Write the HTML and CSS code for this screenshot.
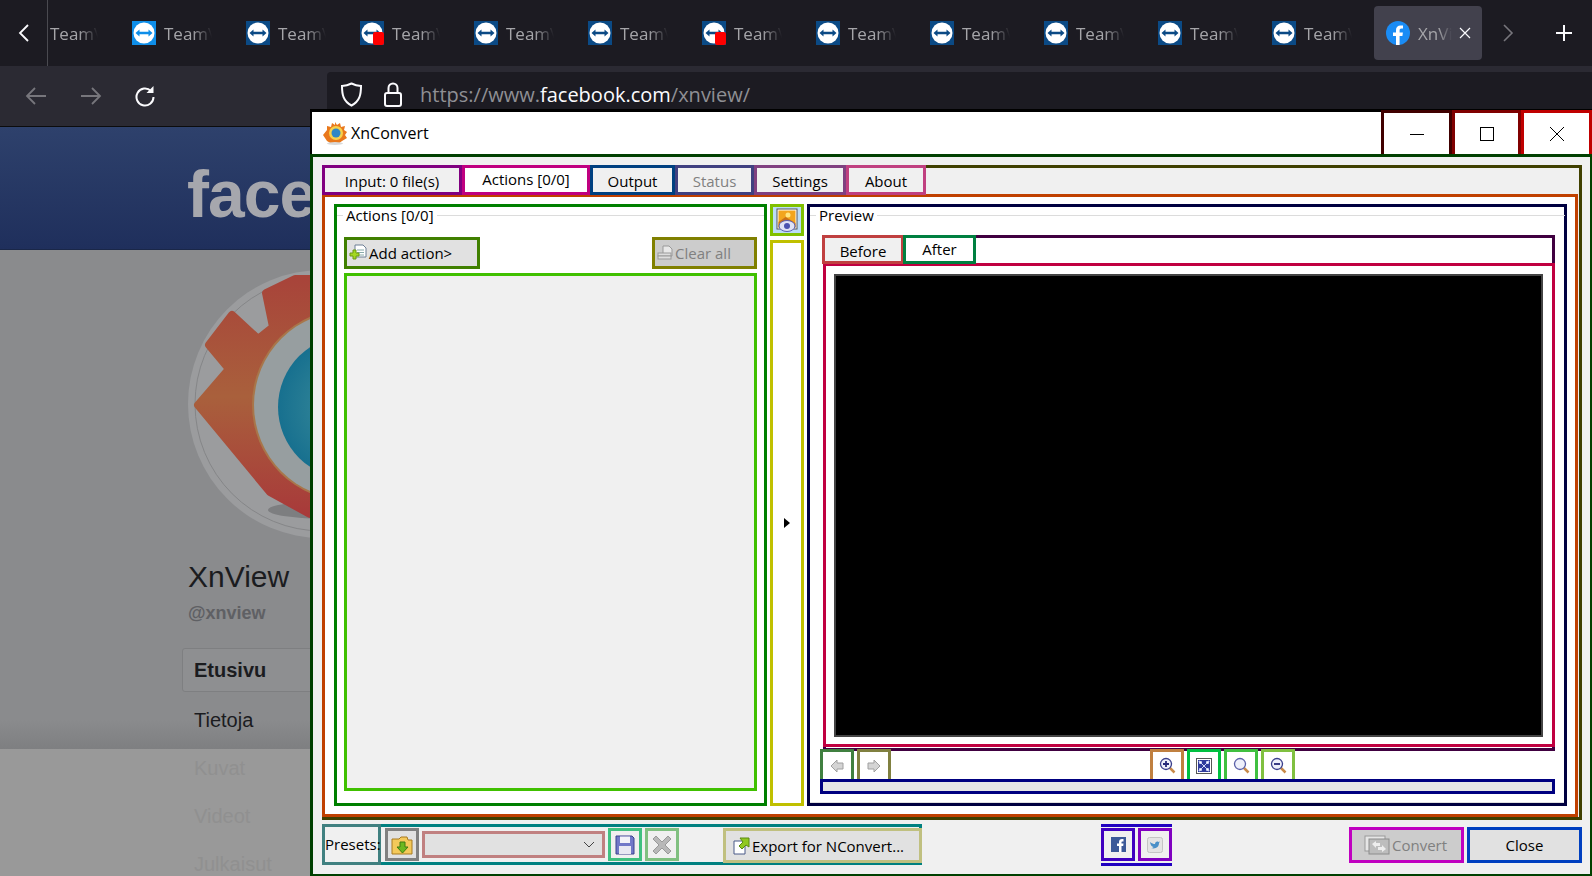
FILE: index.html
```html
<!DOCTYPE html>
<html lang="en">
<head>
	<meta charset="UTF-8">
	<title>XnConvert</title>
	<link rel="stylesheet" href="styles.css">
</head>
<body>
<svg class="defs" width="0" height="0">
	<symbol id="tv" viewBox="0 0 24 24">
		<rect width="24" height="24" fill="#0b4a85"/>
		<circle cx="12" cy="12" r="10.5" fill="#fff"/>
		<path d="M3.5 12l4-3.5v2.2h9V8.500l4 3.500-4 3.500v-2.200h-9v2.200z" fill="#0b4a85"/>
	</symbol>
	<symbol id="tv-red" viewBox="0 0 24 24">
		<use href="#tv" width="24" height="24"/>
		<rect x="13" y="11" width="11" height="13" rx="2" fill="#f00"/>
	</symbol>
</svg>

<div class="browser">
	<div class="tabbar">
		<div class="tab-back"><svg width="12" height="18" viewBox="0 0 12 18"><path d="M10 1L2 9l8 8" fill="none" stroke="#fbfbfe" stroke-width="1.800"/></svg></div>
		<div class="tab tab-first"><span class="tab-label">TeamViewer</span></div>
		<div class="tab"><svg class="fav" viewBox="0 0 24 24"><rect width="24" height="24" fill="#0e8ee9"/><circle cx="12" cy="12" r="10.500" fill="#fff"/><path d="M3.500 12l4-3.500v2.200h9V8.500l4 3.500-4 3.500v-2.200h-9v2.200z" fill="#0e8ee9"/></svg><span class="tab-label">TeamViewer</span></div>
		<div class="tab"><svg class="fav"><use href="#tv"/></svg><span class="tab-label">TeamViewer</span></div>
		<div class="tab"><svg class="fav"><use href="#tv-red"/></svg><span class="tab-label">TeamViewer</span></div>
		<div class="tab"><svg class="fav"><use href="#tv"/></svg><span class="tab-label">TeamViewer</span></div>
		<div class="tab"><svg class="fav"><use href="#tv"/></svg><span class="tab-label">TeamViewer</span></div>
		<div class="tab"><svg class="fav"><use href="#tv-red"/></svg><span class="tab-label">TeamViewer</span></div>
		<div class="tab"><svg class="fav"><use href="#tv"/></svg><span class="tab-label">TeamViewer</span></div>
		<div class="tab"><svg class="fav"><use href="#tv"/></svg><span class="tab-label">TeamViewer</span></div>
		<div class="tab"><svg class="fav"><use href="#tv"/></svg><span class="tab-label">TeamViewer</span></div>
		<div class="tab"><svg class="fav"><use href="#tv"/></svg><span class="tab-label">TeamViewer</span></div>
		<div class="tab"><svg class="fav"><use href="#tv"/></svg><span class="tab-label">TeamViewer</span></div>
		<div class="tab tab-active">
			<svg class="fav" viewBox="0 0 24 24"><circle cx="12" cy="12" r="12" fill="#1a8cf5"/><path d="M10 24v-9H7v-3.500h3V9c0-3 1.800-4.600 4.500-4.600 1.300 0 2.500.2 2.500.2v3h-1.500c-1.500 0-1.900.9-1.900 1.800v2.100h3.300l-.5 3.500h-2.800v9z" fill="#fff"/></svg>
			<span class="tab-label tab-label-short">XnView</span>
			<svg class="tab-close" width="12" height="12" viewBox="0 0 12 12"><path d="M1 1l10 10M11 1L1 11" stroke="#fbfbfe" stroke-width="1.200"/></svg>
		</div>
		<svg class="tab-next" width="12" height="18" viewBox="0 0 12 18"><path d="M2 1l8 8-8 8" fill="none" stroke="#77767c" stroke-width="1.600"/></svg>
		<svg class="tab-new" width="18" height="18" viewBox="0 0 18 18"><path d="M9 1v16M1 9h16" stroke="#fbfbfe" stroke-width="2"/></svg>
	</div>

	<div class="toolbar">
		<svg class="nav-back" width="22" height="20" viewBox="0 0 22 20"><path d="M21 10H2M10 2l-8 8 8 8" fill="none" stroke="#77767c" stroke-width="1.800"/></svg>
		<svg class="nav-fwd" width="22" height="20" viewBox="0 0 22 20"><path d="M1 10h19M12 2l8 8-8 8" fill="none" stroke="#77767c" stroke-width="1.800"/></svg>
		<svg class="nav-reload" width="22" height="22" viewBox="0 0 22 22"><path d="M17 6a8.500 8.500 0 1 0 2.500 6" fill="none" stroke="#fbfbfe" stroke-width="2"/><path d="M19.500 1v7h-7z" fill="#fbfbfe"/></svg>
		<div class="urlbar">
			<svg width="23" height="25" viewBox="0 0 23 25"><path d="M11.500 1.500c3 1.500 6 2.300 9.500 2.500 0 8-1 15-9.500 19.500C3 19 2 12 2 4c3.500-.2 6.500-1 9.500-2.500z" fill="none" stroke="#fbfbfe" stroke-width="2"/></svg>
			<svg class="url-lock" width="18" height="25" viewBox="0 0 18 25"><rect x="1" y="11" width="16" height="13" rx="2" fill="none" stroke="#fbfbfe" stroke-width="2"/><path d="M4.500 11V6a4.500 4.500 0 0 1 9 0v5" fill="none" stroke="#fbfbfe" stroke-width="2"/></svg>
			<span class="url-text">https://www.<b>facebook.com</b>/xnview/</span>
		</div>
	</div>

	<div class="fb-head"><span class="fb-logo">facebook</span></div>
	<div class="fb-page">
		<svg class="fb-avatar" width="268" height="268" viewBox="0 0 268 268">
			<defs>
				<linearGradient id="gear" x1="0" y1="0" x2="0" y2="1"><stop offset="0" stop-color="#a8443a"/><stop offset=".5" stop-color="#a9603c"/><stop offset="1" stop-color="#a83a3a"/></linearGradient>
				<radialGradient id="iris"><stop offset="0" stop-color="#3f8f9c"/><stop offset="1" stop-color="#17708f"/></radialGradient>
			</defs>
			<circle cx="134" cy="134" r="134" fill="#9b9c9e"/>
			<circle cx="134" cy="134" r="127" fill="none" stroke="#858688"/>
			<ellipse cx="140" cy="240" rx="60" ry="9" fill="#7d7e80"/>
			<path d="M10 135l31-36-20-24 23-30 26 24 15-12-7-34 29-14 93 0v235H122l-40-22z" fill="url(#gear)" stroke="url(#gear)" stroke-width="8" stroke-linejoin="round"/>
			<circle cx="160" cy="135" r="96" fill="#a8764a"/>
			<circle cx="160" cy="135" r="94" fill="#979ea0"/>
			<circle cx="162" cy="137" r="72" fill="url(#iris)"/>
		</svg>
		<div class="fb-name">XnView</div>
		<div class="fb-user">@xnview</div>
		<ul class="fb-menu">
			<li class="fb-current">Etusivu</li>
			<li>Tietoja</li>
			<li class="fb-faint">Kuvat</li>
			<li class="fb-faint">Videot</li>
			<li class="fb-faint">Julkaisut</li>
		</ul>
	</div>
</div>

<div class="win">
	<div class="win-title">
		<svg class="win-logo" width="26" height="24" viewBox="0 0 26 24">
			<path d="M13 1l2 3 3-2 1 4 4-1-1 4 3 2-2 3 2 3-5 3-4 3h-6l-5-3-4-6 4-5 0-4 4 1 1-4 3 2z" fill="#e9781c"/>
			<circle cx="14" cy="12" r="7" fill="#f6d04a"/>
			<circle cx="14" cy="12" r="4.500" fill="#2f87c4"/>
			<ellipse cx="13" cy="22.500" rx="8" ry="1.500" fill="#d8d8d8"/>
		</svg>
		<span class="win-name">XnConvert</span>
		<div class="win-btn win-min"><svg width="16" height="16" viewBox="0 0 16 16"><path d="M1 8.500h14" stroke="#000"/></svg></div>
		<div class="win-btn win-max"><svg width="16" height="16" viewBox="0 0 16 16"><rect x="1.500" y="1.500" width="13" height="13" fill="none" stroke="#000"/></svg></div>
		<div class="win-btn win-close"><svg width="16" height="16" viewBox="0 0 16 16"><path d="M1 1l14 14M15 1L1 15" stroke="#000"/></svg></div>
	</div>

	<div class="win-body">
		<div class="tabwidget">
			<div class="tabs">
				<div class="t t-input">Input: 0 file(s)</div>
				<div class="t t-actions t-on">Actions [0/0]</div>
				<div class="t t-output">Output</div>
				<div class="t t-status">Status</div>
				<div class="t t-settings">Settings</div>
				<div class="t t-about">About</div>
			</div>
			<div class="pane">
				<div class="group group-actions">
					<div class="legend"><span>Actions [0/0]</span></div>
					<div class="action-btns">
						<div class="btn btn-add">
							<svg width="18" height="18" viewBox="0 0 18 18"><path d="M6 1h8l3 3v9H6z" fill="#fff" stroke="#6d7f95"/><path d="M8 6h7M8 8.500h7M8 11h7" stroke="#8aa"/><path d="M4 6h3v3h3v3H7v3H4v-3H1V9h3z" fill="#a4d820" stroke="#6c9a10"/></svg>
							Add action&gt;
						</div>
						<div class="btn btn-clear">
							<svg width="16" height="16" viewBox="0 0 16 16"><path d="M6 1h6l3 3v7H6z" fill="#e8e8e8" stroke="#999"/><rect x="1" y="8" width="13" height="3" fill="#ddd" stroke="#999"/><rect x="1" y="11" width="13" height="3" fill="#ddd" stroke="#999"/></svg>
							Clear all
						</div>
					</div>
					<div class="action-list"></div>
				</div>

				<div class="side">
					<div class="preview-toggle">
						<svg width="22" height="24" viewBox="0 0 22 24"><rect x="1" y="1" width="20" height="20" fill="#fff" stroke="#555"/><rect x="2.500" y="2.500" width="17" height="17" fill="#f2a51e"/><circle cx="12" cy="7" r="2.500" fill="#ffe680"/><path d="M2.500 14l7-5 10 6v4.500h-17z" fill="#c8701a"/><ellipse cx="11" cy="18" rx="8" ry="5.500" fill="#dfe2f5" stroke="#5a60b0"/><circle cx="11" cy="18" r="3" fill="#4a52b0"/></svg>
					</div>
					<div class="splitter"><span class="splitter-arrow"></span></div>
				</div>

				<div class="group group-preview">
					<div class="legend"><span>Preview</span></div>
					<div class="pv-tabwidget">
						<div class="pv-tabs">
							<div class="t t-before">Before</div>
							<div class="t t-after t-on">After</div>
						</div>
						<div class="pv-pane"><div class="pv-image"></div></div>
					</div>
					<div class="pv-tools">
						<div class="tool tool-a"><svg width="14" height="14" viewBox="0 0 14 14"><path d="M1 7l6-6v3h6v6H7v3z" fill="#d4d4d4" stroke="#a0a0a0"/></svg></div>
						<div class="tool tool-b"><svg width="14" height="14" viewBox="0 0 14 14"><path d="M13 7L7 1v3H1v6h6v3z" fill="#d4d4d4" stroke="#a0a0a0"/></svg></div>
						<div class="tool tool-c"><svg width="17" height="17" viewBox="0 0 17 17"><path d="M10 10l5.500 5.500" stroke="#c88a4a" stroke-width="2.500"/><circle cx="7" cy="7" r="5.500" fill="#eef0fb" stroke="#3a3f8c" stroke-width="1.300"/><path d="M7 4v6M4 7h6" stroke="#26297a" stroke-width="1.800"/></svg></div>
						<div class="tool tool-d"><svg width="16" height="16" viewBox="0 0 16 16"><rect x=".5" y=".5" width="15" height="15" fill="#fff" stroke="#555"/><rect x="2" y="2" width="12" height="12" fill="#2f3a9c"/><path d="M3 3l3 1-2 2zM13 3l-3 1 2 2zM3 13l3-1-2-2zM13 13l-3-1 2-2zM5 5l6 6M11 5l-6 6" fill="#fff" stroke="#cfd5f5"/></svg></div>
						<div class="tool tool-e"><svg width="17" height="17" viewBox="0 0 17 17"><path d="M10 10l5.500 5.500" stroke="#c88a4a" stroke-width="2.500"/><circle cx="7" cy="7" r="5.500" fill="#eef0fb" stroke="#5a60a8" stroke-width="1.300"/></svg></div>
						<div class="tool tool-f"><svg width="17" height="17" viewBox="0 0 17 17"><path d="M10 10l5.500 5.500" stroke="#c88a4a" stroke-width="2.500"/><circle cx="7" cy="7" r="5.500" fill="#eef0fb" stroke="#3a3f8c" stroke-width="1.300"/><path d="M4 7h6" stroke="#26297a" stroke-width="1.800"/></svg></div>
					</div>
					<div class="pv-progress"></div>
				</div>
			</div>
		</div>

		<div class="bottom">
			<div class="presets">
				<div class="presets-label">Presets:</div>
				<div class="icon-btn ib-folder"><svg width="22" height="20" viewBox="0 0 22 20"><path d="M1 4h7l2-2h6l1 3h4v14H1z" fill="#f4c95a" stroke="#a87a20"/><path d="M9 7h5v5h3l-5.500 6L6 12h3z" fill="#6cb820" stroke="#3f7a10"/></svg></div>
				<div class="combo"><svg width="12" height="7" viewBox="0 0 12 7"><path d="M1 1l5 5 5-5" fill="none" stroke="#444"/></svg></div>
				<div class="icon-btn ib-save"><svg width="20" height="20" viewBox="0 0 20 20"><path d="M1 1h16l2 2v16H1z" fill="#7178c8" stroke="#3c428e"/><rect x="5" y="1.500" width="10" height="6.500" fill="#f2f2f8"/><rect x="4" y="11" width="12" height="8" fill="#e8e8f2"/></svg></div>
				<div class="icon-btn ib-del"><svg width="20" height="20" viewBox="0 0 20 20"><path d="M4 1l6 6 6-6 3 3-6 6 6 6-3 3-6-6-6 6-3-3 6-6-6-6z" fill="#b8b8b8" stroke="#999"/></svg></div>
				<div class="btn btn-export">
					<svg width="17" height="18" viewBox="0 0 17 18"><path d="M1 4h11v13H1z" fill="#fff" stroke="#4a5a88"/><path d="M7 1h9v9l-3-2-4 4-3-3 4-4z" fill="#90c820" stroke="#5a8a10"/></svg>
					Export for NConvert...
				</div>
			</div>

			<div class="social">
				<div class="icon-btn ib-fb"><svg width="15" height="15" viewBox="0 0 15 15"><rect width="15" height="15" fill="#3b5998"/><path d="M8 15V9H6V6.500h2V5c0-2 1.200-3 3-3h1.500v2.400h-1c-.8 0-1 .4-1 1V6.500h2L12.200 9h-1.700v6z" fill="#fff"/></svg></div>
				<div class="icon-btn ib-tw"><svg width="16" height="16" viewBox="0 0 16 16"><rect x=".5" y=".5" width="15" height="15" rx="2" fill="#e4e4e4" stroke="#c4c4c4"/><path d="M3 5c2 1.500 3.500 2 5 2 0-2 2-3 3.500-2l1.500-.5-1 1.500c0 4-3.500 6.500-8 5 1.200 0 2-.4 2.500-1C4.500 9.500 3.500 8 3 5z" fill="#4a90c8"/></svg></div>
			</div>

			<div class="btn btn-convert">
				<svg width="26" height="20" viewBox="0 0 26 20"><rect x="1" y="1" width="20" height="15" fill="#e6e6e6" stroke="#999"/><rect x="5" y="4" width="20" height="15" fill="#bdbdbd" stroke="#8c8c8c"/><path d="M8 9l4-3v2h4v3h-4v2zM22 14l-4 3v-2h-4v-3h4V10z" fill="#eee"/></svg>
				Convert
			</div>
			<div class="btn btn-close">Close</div>
		</div>
	</div>
</div>
</body>
</html>
```

FILE: styles.css
```css
*{
	margin: 0;
	padding: 0;
	box-sizing: border-box;
}
li{
	list-style: none;
}
html,body{
	width: 1592px;
	height: 876px;
	overflow: hidden;
}
body{
	position: relative;
	background: #999;
	font-family: "Open Sans", "Liberation Sans", sans-serif;
}
.defs{
	display: block;
	height: 0;
}

/* firefox bits */
.tabbar{
	height: 66px;
	background: #1c1b22;
	display: flex;
	align-items: center;
	color: #a5a5a9;
	font-size: 17px;
}
.tab-back{
	width: 47px;
	height: 66px;
	padding-left: 18px;
	display: flex;
	align-items: center;
}
.tab{
	width: 114px;
	height: 54px;
	padding-left: 7px;
	display: flex;
	align-items: center;
	gap: 8px;
	flex: none;
}
.tab-first{
	width: 78px;
	height: 66px;
	padding-left: 2px;
	border-left: 1px solid #4a4a50;
}
.fav{
	width: 24px;
	height: 24px;
	flex: none;
}
.tab-label{
	width: 48px;
	overflow: hidden;
	white-space: nowrap;
	-webkit-mask-image: linear-gradient(90deg, #000 60%, transparent);
	mask-image: linear-gradient(90deg, #000 60%, transparent);
}
.tab-label-short{
	width: 34px;
}
.tab-active{
	width: 108px;
	margin-left: -5px;
	padding-left: 12px;
	background: #42414d;
	border-radius: 4px;
}
.tab-close{
	margin-left: -1px;
	flex: none;
}
.tab-next{
	margin-left: 20px;
	flex: none;
}
.tab-new{
	margin-left: 41px;
	flex: none;
}
.toolbar{
	height: 61px;
	background: #2b2a33;
	border-bottom: 1px solid #0c0c0d;
	display: flex;
	align-items: center;
}
.nav-back{
	margin-left: 25px;
}
.nav-fwd{
	margin-left: 33px;
}
.nav-reload{
	margin-left: 32px;
}
.urlbar{
	margin-left: 171px;
	margin-top: 6px;
	flex: 1;
	height: 54px;
	background: #1c1b22;
	border-radius: 4px 0 0 4px;
	padding: 0 0 10px 13px;
	display: flex;
	align-items: center;
}
.url-lock{
	margin-left: 21px;
}
.url-text{
	margin-left: 18px;
	font-size: 20px;
	color: #8f8f94;
}
.url-text b{
	font-weight: 400;
	color: #fbfbfe;
}

/* page behind */
.fb-head{
	height: 123px;
	background: linear-gradient(#2e416c, #1f2f5c);
	border-bottom: 1px solid #1a2748;
	padding: 32px 0 0 187px;
}
.fb-logo{
	font-family: "Liberation Sans", sans-serif;
	font-weight: 700;
	font-size: 66px;
	line-height: 70px;
	color: #a6a7ad;
	letter-spacing: -1px;
}
.fb-page{
	height: 626px;
	background: linear-gradient(#8a8b8d 0, #8a8b8d 470px, #7e7f81 499px, #999 499px);
	padding: 20px 0 0 182px;
	font-family: "Liberation Sans", sans-serif;
	color: #1b1c1f;
}
.fb-avatar{
	display: block;
	margin-left: 6px;
}
.fb-name{
	margin: 21px 0 0 6px;
	font-size: 30px;
	line-height: 36px;
}
.fb-user{
	margin: 6px 0 0 6px;
	font-size: 18px;
	line-height: 24px;
	font-weight: 700;
	color: #5f6064;
}
.fb-menu{
	margin-top: 23px;
	font-size: 20px;
}
.fb-menu li{
	height: 48px;
	line-height: 48px;
	padding-left: 12px;
}
.fb-menu .fb-current{
	height: 44px;
	line-height: 42px;
	font-weight: 700;
	border: 1px solid #7e7f81;
	border-radius: 3px;
	background: #8e8f91;
	margin-bottom: 4px;
	padding-left: 11px;
}
.fb-menu .fb-faint{
	color: #909090;
}

/* the window */
.win{
	position: absolute;
	left: 310px;
	top: 109px;
	width: 1282px;
	height: 767px;
	overflow: hidden;
	font-size: 15px;
	color: #000;
}
.win-title{
	height: 45px;
	background: #fff;
	border-top: 3px solid #000;
	border-left: 2px solid #000;
	display: flex;
	align-items: center;
}
.win-logo{
	margin-left: 10px;
}
.win-name{
	margin-left: 3px;
	font-size: 16px;
	flex: 1;
}
.win-btn{
	height: 44px;
	margin-top: -2px;
	border: 3px solid;
	border-bottom: none;
	display: flex;
	align-items: center;
	justify-content: center;
}
.win-min{
	width: 71px;
	border-color: #400000;
}
.win-max{
	width: 69px;
	border-color: #800000;
	border-left-width: 3px;
}
.win-close{
	width: 71px;
	border-color: #c00000;
}
.win-body{
	width: 1283px;
	height: 723px;
	background: #f0f0f0;
	border: 3px solid #004000;
	padding: 8px 8px 0 9px;
}
.tabwidget{
	height: 655px;
	border: 3px solid #404000;
}
.tabs,
.pv-tabs{
	display: flex;
}
.tabs{
	margin: -3px 0 0 -3px;
}
.t{
	height: 30px;
	border: 3px solid;
	padding-top: 2px;
	line-height: 22px;
	text-align: center;
	background: #f0f0f0;
	white-space: nowrap;
}
.t-on{
	background: #fff;
	padding-top: 0;
}
.t-input{
	width: 140px;
	border-color: #800080;
}
.t-actions{
	width: 128px;
	border-color: #c00080;
}
.t-output{
	width: 85px;
	border-color: #004080;
}
.t-status{
	width: 79px;
	border-color: #404080;
	color: #808080;
}
.t-settings{
	width: 92px;
	border-color: #804080;
}
.t-about{
	width: 80px;
	border-color: #c04080;
}
.pane{
	width: 1256px;
	height: 623px;
	margin: -1px 0 0 -3px;
	background: #fff;
	border: 3px solid #c04000;
	padding: 7px 8px 8px 9px;
	display: flex;
	gap: 3px;
}
.group{
	border: 3px solid #008000;
	background: #fff;
}
.group-actions{
	width: 433px;
	padding: 0 7px;
}
.legend{
	height: 16px;
	display: flex;
	align-items: center;
	gap: 3px;
	line-height: 16px;
}
.legend:before,
.legend:after{
	content: "";
	height: 1px;
	background: #dcdcdc;
}
.legend:before{
	width: 6px;
}
.legend:after{
	flex: 1;
}
.group-actions .legend{
	margin: 0 -7px;
}
.action-btns{
	margin-top: 14px;
	display: flex;
	justify-content: space-between;
}
.btn{
	height: 32px;
	border: 3px solid;
	background: #e1e1e1;
	display: flex;
	align-items: center;
	gap: 2px;
	padding-left: 2px;
	white-space: nowrap;
}
.btn-add{
	width: 136px;
	border-color: #408000;
}
.btn-clear{
	width: 105px;
	border-color: #808000;
	background: #ccc;
	color: #808080;
	padding-left: 2px;
}
.action-list{
	height: 518px;
	margin-top: 4px;
	background: #f0f0f0;
	border: 3px solid #40c000;
}
.side{
	width: 34px;
	display: flex;
	flex-direction: column;
	gap: 4px;
}
.preview-toggle{
	height: 32px;
	border: 3px solid #80c000;
	background: #bcdcf8;
	display: flex;
	align-items: center;
	justify-content: center;
}
.splitter{
	flex: 1;
	border: 3px solid #c0c000;
	display: flex;
	align-items: center;
	justify-content: center;
}
.splitter-arrow{
	width: 0;
	height: 0;
	border-left: 6px solid #000;
	border-top: 5px solid transparent;
	border-bottom: 5px solid transparent;
}
.group-preview{
	width: 760px;
	border-color: #000040;
	padding: 0 9px 0 10px;
	box-shadow: inset 0 -1px #e0e0e0;
}
.group-preview .legend{
	margin: 0 -10px 0 -10px;
}
.pv-tabwidget{
	margin-top: 12px;
	height: 516px;
	border: 3px solid #400040;
	margin-left: 3px;
	margin-right: 0;
}
.pv-tabs{
	margin: -3px 0 0 -4px;
}
.t-before{
	width: 82px;
	height: 29px;
	border-color: #c04040;
}
.t-after{
	width: 73px;
	height: 29px;
	margin-left: -1px;
	border-color: #008040;
}
.pv-pane{
	width: 732px;
	height: 484px;
	margin: -1px 0 0 -3px;
	background: #fff;
	border: 3px solid #c00040;
	padding: 8px 9px 7px 8px;
}
.pv-image{
	height: 100%;
	background: #000;
	border: 2px solid #444;
}
.pv-tools{
	margin: -2px 0 0 0;
	height: 30px;
	display: flex;
	gap: 3px;
}
.tool{
	width: 34px;
	height: 30px;
	border: 3px solid;
	border-bottom: none;
	background: #fff;
	display: flex;
	align-items: center;
	justify-content: center;
}
.tool-a{
	border-color: #408040;
}
.tool-b{
	border-color: #808040;
}
.tool-c{
	border-color: #c08040;
	margin-left: 256px;
}
.tool-d{
	border-color: #00c040;
}
.tool-e{
	border-color: #40c040;
}
.tool-f{
	border-color: #80c040;
}
.pv-progress{
	height: 15px;
	background: #e6e6e6;
	border: 3px solid #000080;
}

/* bottom row */
.bottom{
	margin-top: 4px;
	display: flex;
	align-items: flex-start;
}
.presets{
	width: 600px;
	height: 41px;
	border: 3px solid #008080;
	padding-top: 1px;
	display: flex;
	align-items: flex-start;
	gap: 3px;
}
.presets-label{
	width: 59px;
	height: 41px;
	margin: -4px 1px 0 -3px;
	background: #f0f0f0;
	border: 3px solid #408080;
	line-height: 34px;
	white-space: nowrap;
}
.icon-btn{
	width: 34px;
	height: 33px;
	border: 3px solid;
	display: flex;
	align-items: center;
	justify-content: center;
}
.ib-folder{
	border-color: #808080;
	background: #e1e1e1;
}
.combo{
	width: 183px;
	height: 27px;
	margin-top: 3px;
	background: #e1e1e1;
	border: 3px solid #c08080;
	display: flex;
	align-items: center;
	justify-content: flex-end;
	padding-right: 7px;
}
.ib-save{
	border-color: #40c080;
}
.ib-del{
	border-color: #80c080;
}
.btn-export{
	width: 199px;
	height: 35px;
	margin: 0 -3px 0 auto;
	border-color: #c0c080;
	padding-left: 7px;
}
.social{
	width: 71px;
	height: 42px;
	margin-left: 179px;
	border: 3px solid #2000c0;
	border-left: none;
	border-right: none;
	padding-top: 1px;
	display: flex;
	gap: 3px;
}
.ib-fb{
	border-color: #4000c0;
}
.ib-tw{
	border-color: #8000c0;
}
.btn-convert{
	width: 115px;
	height: 36px;
	margin: 3px 0 0 auto;
	border-color: #c000c0;
	background: #ccc;
	color: #808080;
	padding-left: 12px;
}
.btn-close{
	width: 115px;
	height: 36px;
	margin: 3px 0 0 3px;
	border-color: #0040c0;
	justify-content: center;
	padding-left: 0;
}
```
